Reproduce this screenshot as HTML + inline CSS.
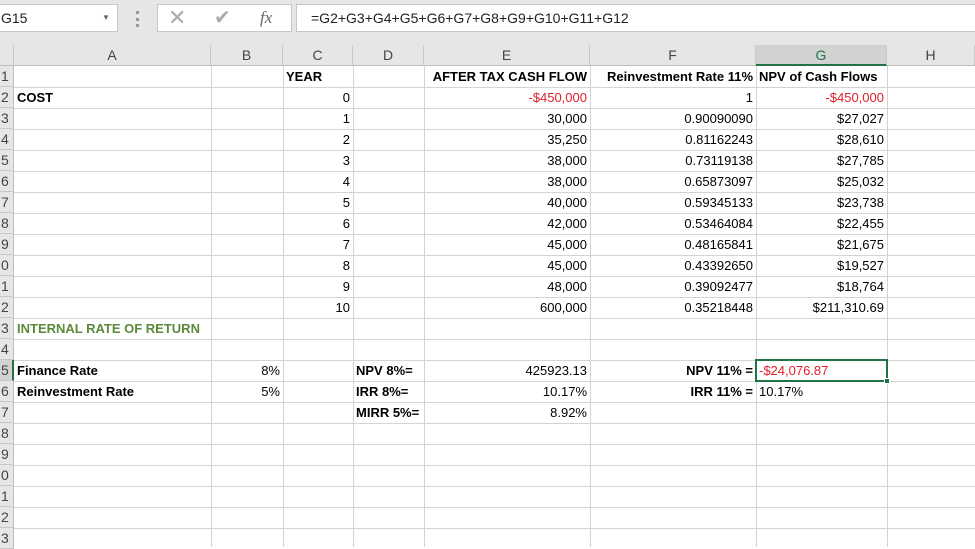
<!DOCTYPE html>
<html><head><meta charset="utf-8"><style>
*{margin:0;padding:0;box-sizing:border-box}
body{width:975px;height:547px;overflow:hidden;background:#fff;font-family:"Liberation Sans",sans-serif;position:relative}
.top{position:absolute;left:0;top:0;width:975px;height:45px;background:#e6e6e6}
.box{position:absolute;background:#fff;border:1px solid #c6c6c6}
.hdr{position:absolute;top:45px;height:21px;background:#e6e6e6;border-right:1px solid #c8c8c8;border-bottom:1px solid #bdbdbd;font-size:14px;color:#444;text-align:center;line-height:21px}
.rh{position:absolute;left:0;width:14px;height:21px;background:#e6e6e6;border-bottom:1px solid #c8c8c8;border-right:1px solid #bdbdbd;font-size:14px;color:#444;line-height:21px;padding-left:1px;overflow:hidden}
.vl{position:absolute;top:66px;width:1px;height:481px;background:#d4d4d4}
.hl{position:absolute;left:14px;width:961px;height:1px;background:#d4d4d4}
.c{position:absolute;height:20px;line-height:21px;font-size:13px;color:#000;white-space:nowrap;padding:0 3px}
.r{text-align:right}.b{font-weight:bold}.red{color:#e0202a}.g{color:#5a8a3a;font-weight:bold}
</style></head><body>
<div class="top"></div>
<div class="box" style="left:-2px;top:4px;width:120px;height:28px;font-size:14px;line-height:26px;padding-left:2px;color:#222">G15<span style="position:absolute;left:103px;top:0;font-size:8px;color:#666">▼</span></div>
<div style="position:absolute;left:136px;top:11px;width:3px;height:16px;border-left:3px dotted #999"></div>
<div class="box" style="left:157px;top:4px;width:135px;height:28px"></div>
<div style="position:absolute;left:168px;top:4px;font-size:22px;color:#aaa;line-height:28px">✕</div>
<div style="position:absolute;left:214px;top:4px;font-size:20px;color:#aaa;line-height:28px">✔</div>
<div style="position:absolute;left:260px;top:4px;font-size:17px;color:#666;line-height:28px;font-family:'Liberation Serif',serif;font-style:italic">fx</div>
<div class="box" style="left:296px;top:4px;width:680px;height:28px;font-size:14px;line-height:26px;padding-left:14px;color:#222">=G2+G3+G4+G5+G6+G7+G8+G9+G10+G11+G12</div>

<div class="hdr" style="left:0;width:14px"></div>
<div class="hdr" style="left:14px;width:197px">A</div>
<div class="hdr" style="left:211px;width:72px">B</div>
<div class="hdr" style="left:283px;width:70px">C</div>
<div class="hdr" style="left:353px;width:71px">D</div>
<div class="hdr" style="left:424px;width:166px">E</div>
<div class="hdr" style="left:590px;width:166px">F</div>
<div class="hdr" style="left:756px;width:131px;background:#d2d2d2;color:#217346;border-bottom:2px solid #217346">G</div>
<div class="hdr" style="left:887px;width:88px">H</div>

<div class="vl" style="left:211px"></div><div class="vl" style="left:283px"></div><div class="vl" style="left:353px"></div><div class="vl" style="left:424px"></div><div class="vl" style="left:590px"></div><div class="vl" style="left:756px"></div><div class="vl" style="left:887px"></div>

<div class="hl" style="top:87px"></div><div class="hl" style="top:108px"></div><div class="hl" style="top:129px"></div><div class="hl" style="top:150px"></div><div class="hl" style="top:171px"></div><div class="hl" style="top:192px"></div><div class="hl" style="top:213px"></div><div class="hl" style="top:234px"></div><div class="hl" style="top:255px"></div><div class="hl" style="top:276px"></div><div class="hl" style="top:297px"></div><div class="hl" style="top:318px"></div><div class="hl" style="top:339px"></div><div class="hl" style="top:360px"></div><div class="hl" style="top:381px"></div><div class="hl" style="top:402px"></div><div class="hl" style="top:423px"></div><div class="hl" style="top:444px"></div><div class="hl" style="top:465px"></div><div class="hl" style="top:486px"></div><div class="hl" style="top:507px"></div><div class="hl" style="top:528px"></div>

<div class="rh" style="top:66px">1</div><div class="rh" style="top:87px">2</div><div class="rh" style="top:108px">3</div><div class="rh" style="top:129px">4</div><div class="rh" style="top:150px">5</div><div class="rh" style="top:171px">6</div><div class="rh" style="top:192px">7</div><div class="rh" style="top:213px">8</div><div class="rh" style="top:234px">9</div><div class="rh" style="top:255px">0</div><div class="rh" style="top:276px">1</div><div class="rh" style="top:297px">2</div><div class="rh" style="top:318px">3</div><div class="rh" style="top:339px">4</div><div class="rh" style="top:360px;background:#d2d2d2;border-right:2px solid #217346">5</div><div class="rh" style="top:381px">6</div><div class="rh" style="top:402px">7</div><div class="rh" style="top:423px">8</div><div class="rh" style="top:444px">9</div><div class="rh" style="top:465px">0</div><div class="rh" style="top:486px">1</div><div class="rh" style="top:507px">2</div><div class="rh" style="top:528px">3</div>

<!-- row1 -->
<div class="c b" style="left:283px;top:66px">YEAR</div>
<div class="c b r" style="left:424px;top:66px;width:166px">AFTER TAX CASH FLOW</div>
<div class="c b r" style="left:590px;top:66px;width:166px">Reinvestment Rate 11%</div>
<div class="c b" style="left:756px;top:66px">NPV of Cash Flows</div>
<div class="c b" style="left:14px;top:87px">COST</div>

<div class="c r" style="left:283px;top:87px;width:70px">0</div><div class="c r red" style="left:424px;top:87px;width:166px">-$450,000</div><div class="c r" style="left:590px;top:87px;width:166px">1</div><div class="c r red" style="left:756px;top:87px;width:131px">-$450,000</div>
<div class="c r" style="left:283px;top:108px;width:70px">1</div><div class="c r" style="left:424px;top:108px;width:166px">30,000</div><div class="c r" style="left:590px;top:108px;width:166px">0.90090090</div><div class="c r" style="left:756px;top:108px;width:131px">$27,027</div>
<div class="c r" style="left:283px;top:129px;width:70px">2</div><div class="c r" style="left:424px;top:129px;width:166px">35,250</div><div class="c r" style="left:590px;top:129px;width:166px">0.81162243</div><div class="c r" style="left:756px;top:129px;width:131px">$28,610</div>
<div class="c r" style="left:283px;top:150px;width:70px">3</div><div class="c r" style="left:424px;top:150px;width:166px">38,000</div><div class="c r" style="left:590px;top:150px;width:166px">0.73119138</div><div class="c r" style="left:756px;top:150px;width:131px">$27,785</div>
<div class="c r" style="left:283px;top:171px;width:70px">4</div><div class="c r" style="left:424px;top:171px;width:166px">38,000</div><div class="c r" style="left:590px;top:171px;width:166px">0.65873097</div><div class="c r" style="left:756px;top:171px;width:131px">$25,032</div>
<div class="c r" style="left:283px;top:192px;width:70px">5</div><div class="c r" style="left:424px;top:192px;width:166px">40,000</div><div class="c r" style="left:590px;top:192px;width:166px">0.59345133</div><div class="c r" style="left:756px;top:192px;width:131px">$23,738</div>
<div class="c r" style="left:283px;top:213px;width:70px">6</div><div class="c r" style="left:424px;top:213px;width:166px">42,000</div><div class="c r" style="left:590px;top:213px;width:166px">0.53464084</div><div class="c r" style="left:756px;top:213px;width:131px">$22,455</div>
<div class="c r" style="left:283px;top:234px;width:70px">7</div><div class="c r" style="left:424px;top:234px;width:166px">45,000</div><div class="c r" style="left:590px;top:234px;width:166px">0.48165841</div><div class="c r" style="left:756px;top:234px;width:131px">$21,675</div>
<div class="c r" style="left:283px;top:255px;width:70px">8</div><div class="c r" style="left:424px;top:255px;width:166px">45,000</div><div class="c r" style="left:590px;top:255px;width:166px">0.43392650</div><div class="c r" style="left:756px;top:255px;width:131px">$19,527</div>
<div class="c r" style="left:283px;top:276px;width:70px">9</div><div class="c r" style="left:424px;top:276px;width:166px">48,000</div><div class="c r" style="left:590px;top:276px;width:166px">0.39092477</div><div class="c r" style="left:756px;top:276px;width:131px">$18,764</div>
<div class="c r" style="left:283px;top:297px;width:70px">10</div><div class="c r" style="left:424px;top:297px;width:166px">600,000</div><div class="c r" style="left:590px;top:297px;width:166px">0.35218448</div><div class="c r" style="left:756px;top:297px;width:131px">$211,310.69</div>

<div class="c g" style="left:14px;top:318px">INTERNAL RATE OF RETURN</div>
<div class="c b" style="left:14px;top:360px">Finance Rate</div><div class="c r" style="left:211px;top:360px;width:72px">8%</div>
<div class="c b" style="left:14px;top:381px">Reinvestment Rate</div><div class="c r" style="left:211px;top:381px;width:72px">5%</div>
<div class="c b" style="left:353px;top:360px">NPV 8%=</div><div class="c r" style="left:424px;top:360px;width:166px">425923.13</div>
<div class="c b" style="left:353px;top:381px">IRR 8%=</div><div class="c r" style="left:424px;top:381px;width:166px">10.17%</div>
<div class="c b" style="left:353px;top:402px">MIRR 5%=</div><div class="c r" style="left:424px;top:402px;width:166px">8.92%</div>
<div class="c b r" style="left:590px;top:360px;width:166px">NPV 11% =</div>
<div class="c b r" style="left:590px;top:381px;width:166px">IRR 11% =</div>
<div class="c" style="left:756px;top:381px">10.17%</div>
<div style="position:absolute;left:755px;top:359px;width:133px;height:23px;border:2px solid #217346"></div>
<div style="position:absolute;left:884px;top:378px;width:6px;height:6px;background:#217346;border:1px solid #fff"></div>
<div class="c red" style="left:756px;top:360px">-$24,076.87</div>
</body></html>
